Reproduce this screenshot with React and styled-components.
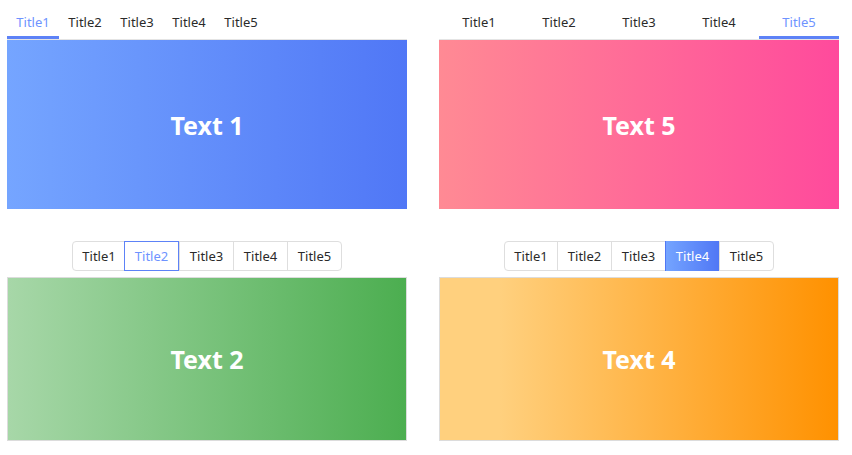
import React from "react";
import styled, { createGlobalStyle, css } from "styled-components";

const GlobalStyle = createGlobalStyle`
  html, body { margin: 0; padding: 0; background: #fff; }
  body { font-family: "Noto Sans", "Open Sans", sans-serif; }
`;

const Grid = styled.div`
  display: grid;
  grid-template-columns: 400px 400px;
  column-gap: 32px;
  row-gap: 32px;
  padding: 8px 0 0 7px;
`;

const Column = styled.div`
  display: flex;
  flex-direction: column;
`;

const LineBar = styled.div`
  display: flex;
  height: 31px;
  border-bottom: 1px solid #e4e4e4;
`;

const LineTab = styled.div`
  ${(p) => (p.$stretch ? css`flex: 1;` : css`width: 52px;`)}
  display: flex;
  align-items: center;
  justify-content: center;
  box-sizing: border-box;
  font-size: 13px;
  color: ${(p) => (p.$active ? "#6e93ff" : "#2a2a2a")};
  border-bottom: 3px solid ${(p) => (p.$active ? "#5d82f7" : "transparent")};
  cursor: pointer;
`;

const SegBar = styled.div`
  align-self: center;
  display: flex;
  height: 30px;
  border: 1px solid #dedede;
  border-radius: 4px;
  box-sizing: border-box;
  margin-bottom: 6px;
`;

const SegTab = styled.div`
  width: 54px;
  box-sizing: border-box;
  display: flex;
  align-items: center;
  justify-content: center;
  font-size: 13px;
  color: #2a2a2a;
  border-left: 1px solid #dedede;
  cursor: pointer;
  &:first-child { border-left: none; width: 52px; border-radius: 3px 0 0 3px; }
  &:last-child { border-radius: 0 3px 3px 0; }
  ${(p) =>
    p.$variant === "outline" &&
    css`
      color: #6e93ff;
      margin: -1px 0;
      border: 1px solid #5d82f7;
      width: 55px;
      margin-left: -1px;
      position: relative;
    `}
  ${(p) =>
    p.$variant === "fill" &&
    css`
      color: #fff;
      background: linear-gradient(to right, #74a4ff, #5077f5);
      margin: -1px 0;
      border-left-color: transparent;
    `}
`;

const Panel = styled.div`
  height: ${(p) => (p.$bordered ? "164px" : "169px")};
  box-sizing: border-box;
  display: flex;
  align-items: center;
  justify-content: center;
  background: ${(p) => p.$bg};
  ${(p) => p.$bordered && css`border: 1px solid #dcdcdc;`}
  color: #fff;
  font-size: 25px;
  font-weight: 700;
`;

const titles = ["Title1", "Title2", "Title3", "Title4", "Title5"];

const gradients = {
  blue: "linear-gradient(to right, #75a5ff, #5077f6)",
  pink: "linear-gradient(to right, #ff8a94, #ff4a9c)",
  green: "linear-gradient(to right, #a7d7a8, #4cae50)",
  orange: "linear-gradient(to right, #ffd07e 15%, #ff9100)",
};

function LineTabs({ active, stretch }) {
  return (
    <LineBar>
      {titles.map((t, i) => (
        <LineTab key={t} $stretch={stretch} $active={i === active}>
          {t}
        </LineTab>
      ))}
    </LineBar>
  );
}

function SegTabs({ active, variant }) {
  return (
    <SegBar>
      {titles.map((t, i) => (
        <SegTab key={t} $variant={i === active ? variant : undefined}>
          {t}
        </SegTab>
      ))}
    </SegBar>
  );
}

export default function App() {
  return (
    <>
      <GlobalStyle />
      <Grid>
        <Column>
          <LineTabs active={0} />
          <Panel $bg={gradients.blue}>Text 1</Panel>
        </Column>
        <Column>
          <LineTabs active={4} stretch />
          <Panel $bg={gradients.pink}>Text 5</Panel>
        </Column>
        <Column>
          <SegTabs active={1} variant="outline" />
          <Panel $bordered $bg={gradients.green}>Text 2</Panel>
        </Column>
        <Column>
          <SegTabs active={3} variant="fill" />
          <Panel $bordered $bg={gradients.orange}>Text 4</Panel>
        </Column>
      </Grid>
    </>
  );
}
